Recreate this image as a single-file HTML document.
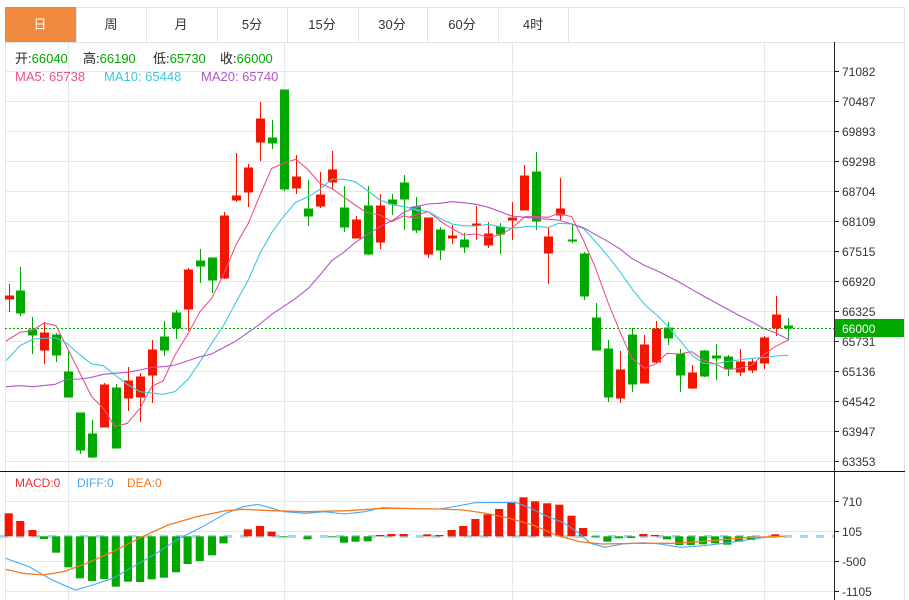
<!DOCTYPE html>
<html><head><meta charset="utf-8"><style>
body{margin:0;background:#fff;width:909px;height:600px;overflow:hidden;font-family:"Liberation Sans","Noto Sans CJK SC",sans-serif}
svg{position:absolute;left:0;top:0}
.r{fill:#f21500;stroke:#f21500}
.g{fill:#00a800;stroke:#00a800}
text{font-family:"Liberation Sans","Noto Sans CJK SC",sans-serif}
</style></head><body>
<svg width="909" height="600" viewBox="0 0 909 600">
<rect x="5.5" y="7.5" width="899" height="35" fill="#fff" stroke="#dde3e8"/>
<rect x="5" y="7" width="71" height="35" fill="#f0893d"/>
<g stroke="#dde3e8"><line x1="146.5" y1="7" x2="146.5" y2="42"/><line x1="217.5" y1="7" x2="217.5" y2="42"/><line x1="287.5" y1="7" x2="287.5" y2="42"/><line x1="358.5" y1="7" x2="358.5" y2="42"/><line x1="427.5" y1="7" x2="427.5" y2="42"/><line x1="498.5" y1="7" x2="498.5" y2="42"/><line x1="568.5" y1="7" x2="568.5" y2="42"/><line x1="76.5" y1="7" x2="76.5" y2="42"/></g>
<g font-size="13" text-anchor="middle" fill="#333">
<text x="40" y="29" fill="#fff">日</text><text x="111" y="29">周</text><text x="181" y="29">月</text><text x="252" y="29">5分</text><text x="322" y="29">15分</text><text x="392" y="29">30分</text><text x="462" y="29">60分</text><text x="533" y="29">4时</text></g>
<line x1="5.5" y1="42" x2="5.5" y2="600" stroke="#dde3e8"/>
<line x1="904.5" y1="42" x2="904.5" y2="600" stroke="#dde3e8"/>
<g stroke="#e1e9ef">
<line x1="5" y1="71.5" x2="834" y2="71.5"/><line x1="5" y1="101.5" x2="834" y2="101.5"/><line x1="5" y1="131.5" x2="834" y2="131.5"/><line x1="5" y1="161.5" x2="834" y2="161.5"/><line x1="5" y1="191.5" x2="834" y2="191.5"/><line x1="5" y1="221.5" x2="834" y2="221.5"/><line x1="5" y1="251.5" x2="834" y2="251.5"/><line x1="5" y1="281.5" x2="834" y2="281.5"/><line x1="5" y1="311.5" x2="834" y2="311.5"/><line x1="5" y1="341.5" x2="834" y2="341.5"/><line x1="5" y1="371.5" x2="834" y2="371.5"/><line x1="5" y1="401.5" x2="834" y2="401.5"/><line x1="5" y1="431.5" x2="834" y2="431.5"/><line x1="5" y1="461.5" x2="834" y2="461.5"/>
<line x1="5" y1="501.5" x2="834" y2="501.5"/><line x1="5" y1="531.5" x2="834" y2="531.5"/><line x1="5" y1="561.5" x2="834" y2="561.5"/><line x1="5" y1="591.5" x2="834" y2="591.5"/>
<line x1="68.5" y1="42" x2="68.5" y2="600"/><line x1="284.5" y1="42" x2="284.5" y2="600"/><line x1="512.5" y1="42" x2="512.5" y2="600"/><line x1="764.5" y1="42" x2="764.5" y2="600"/>
</g>
<line x1="0" y1="471.5" x2="905" y2="471.5" stroke="#111"/>
<line x1="834.5" y1="42" x2="834.5" y2="600" stroke="#222"/>
<g stroke="#222"><line x1="834" y1="71.5" x2="839" y2="71.5"/><line x1="834" y1="101.5" x2="839" y2="101.5"/><line x1="834" y1="131.5" x2="839" y2="131.5"/><line x1="834" y1="161.5" x2="839" y2="161.5"/><line x1="834" y1="191.5" x2="839" y2="191.5"/><line x1="834" y1="221.5" x2="839" y2="221.5"/><line x1="834" y1="251.5" x2="839" y2="251.5"/><line x1="834" y1="281.5" x2="839" y2="281.5"/><line x1="834" y1="311.5" x2="839" y2="311.5"/><line x1="834" y1="341.5" x2="839" y2="341.5"/><line x1="834" y1="371.5" x2="839" y2="371.5"/><line x1="834" y1="401.5" x2="839" y2="401.5"/><line x1="834" y1="431.5" x2="839" y2="431.5"/><line x1="834" y1="461.5" x2="839" y2="461.5"/><line x1="834" y1="501.5" x2="839" y2="501.5"/><line x1="834" y1="531.5" x2="839" y2="531.5"/><line x1="834" y1="561.5" x2="839" y2="561.5"/><line x1="834" y1="591.5" x2="839" y2="591.5"/></g>
<g font-size="12" fill="#333">
<text x="842" y="76">71082</text><text x="842" y="106">70487</text><text x="842" y="136">69893</text><text x="842" y="166">69298</text><text x="842" y="196">68704</text><text x="842" y="226">68109</text><text x="842" y="256">67515</text><text x="842" y="286">66920</text><text x="842" y="316">66325</text><text x="842" y="346">65731</text><text x="842" y="376">65136</text><text x="842" y="406">64542</text><text x="842" y="436">63947</text><text x="842" y="466">63353</text>
<text x="842" y="506">710</text><text x="842" y="536">105</text><text x="842" y="566">-500</text><text x="842" y="596">-1105</text></g>
<line x1="5" y1="328.5" x2="834" y2="328.5" stroke="#00a800" stroke-dasharray="2,2"/>
<rect x="835" y="319" width="69" height="18" fill="#00a800"/>
<text x="842" y="333" font-size="12" fill="#fff">66000</text>
<g font-size="13">
<text x="15" y="63" fill="#222">开:<tspan fill="#00a800">66040</tspan></text>
<text x="83" y="63" fill="#222">高:<tspan fill="#00a800">66190</tspan></text>
<text x="153" y="63" fill="#222">低:<tspan fill="#00a800">65730</tspan></text>
<text x="220" y="63" fill="#222">收:<tspan fill="#00a800">66000</tspan></text>
<text x="15" y="81" fill="#f0508a">MA5: 65738</text>
<text x="104" y="81" fill="#3cc8dc">MA10: 65448</text>
<text x="201" y="81" fill="#b057c8">MA20: 65740</text>
</g>
<g font-size="12"><text x="15" y="487" fill="#f03030">MACD:0</text><text x="77" y="487" fill="#4aa7f0">DIFF:0</text><text x="127" y="487" fill="#f57a20">DEA:0</text></g>
<g stroke-width="1">
<line class="r" x1="9.5" y1="284" x2="9.5" y2="312"/><rect class="r" x="5.5" y="296" width="8" height="3"/>
<line class="g" x1="20.5" y1="267" x2="20.5" y2="316"/><rect class="g" x="16.5" y="291" width="8" height="22"/>
<line class="g" x1="32.5" y1="317" x2="32.5" y2="354"/><rect class="g" x="28.5" y="330" width="8" height="5"/>
<line class="r" x1="44.5" y1="322" x2="44.5" y2="364"/><rect class="r" x="40.5" y="333" width="8" height="17"/>
<line class="g" x1="56.5" y1="333" x2="56.5" y2="362"/><rect class="g" x="52.5" y="335" width="8" height="20"/>
<line class="g" x1="68.5" y1="351" x2="68.5" y2="397"/><rect class="g" x="64.5" y="372" width="8" height="25"/>
<line class="g" x1="80.5" y1="413" x2="80.5" y2="454"/><rect class="g" x="76.5" y="413" width="8" height="37"/>
<line class="g" x1="92.5" y1="420" x2="92.5" y2="458"/><rect class="g" x="88.5" y="434" width="8" height="23"/>
<line class="r" x1="104.5" y1="383" x2="104.5" y2="427"/><rect class="r" x="100.5" y="385" width="8" height="42"/>
<line class="g" x1="116.5" y1="384" x2="116.5" y2="448"/><rect class="g" x="112.5" y="388" width="8" height="60"/>
<line class="r" x1="128.5" y1="367" x2="128.5" y2="411"/><rect class="r" x="124.5" y="381" width="8" height="17"/>
<line class="r" x1="140.5" y1="373" x2="140.5" y2="422"/><rect class="r" x="136.5" y="377" width="8" height="20"/>
<line class="r" x1="152.5" y1="340" x2="152.5" y2="403"/><rect class="r" x="148.5" y="350" width="8" height="25"/>
<line class="g" x1="164.5" y1="321" x2="164.5" y2="356"/><rect class="g" x="160.5" y="337" width="8" height="13"/>
<line class="g" x1="176.5" y1="310" x2="176.5" y2="339"/><rect class="g" x="172.5" y="313" width="8" height="15"/>
<line class="r" x1="188.5" y1="268" x2="188.5" y2="331"/><rect class="r" x="184.5" y="270" width="8" height="39"/>
<line class="g" x1="200.5" y1="249" x2="200.5" y2="283"/><rect class="g" x="196.5" y="261" width="8" height="5"/>
<line class="g" x1="212.5" y1="258" x2="212.5" y2="293"/><rect class="g" x="208.5" y="258" width="8" height="22"/>
<line class="r" x1="224.5" y1="212" x2="224.5" y2="279"/><rect class="r" x="220.5" y="216" width="8" height="62"/>
<line class="r" x1="236.5" y1="153" x2="236.5" y2="202"/><rect class="r" x="232.5" y="196" width="8" height="4"/>
<line class="r" x1="248.5" y1="164" x2="248.5" y2="207"/><rect class="r" x="244.5" y="168" width="8" height="24"/>
<line class="r" x1="260.5" y1="102" x2="260.5" y2="161"/><rect class="r" x="256.5" y="119" width="8" height="23"/>
<line class="g" x1="272.5" y1="120" x2="272.5" y2="149"/><rect class="g" x="268.5" y="138" width="8" height="5"/>
<line class="g" x1="284.5" y1="90" x2="284.5" y2="191"/><rect class="g" x="280.5" y="90" width="8" height="99"/>
<line class="r" x1="296.5" y1="155" x2="296.5" y2="194"/><rect class="r" x="292.5" y="177" width="8" height="11"/>
<line class="g" x1="308.5" y1="180" x2="308.5" y2="226"/><rect class="g" x="304.5" y="209" width="8" height="7"/>
<line class="r" x1="320.5" y1="172" x2="320.5" y2="208"/><rect class="r" x="316.5" y="195" width="8" height="11"/>
<line class="r" x1="332.5" y1="151" x2="332.5" y2="190"/><rect class="r" x="328.5" y="170" width="8" height="12"/>
<line class="g" x1="344.5" y1="186" x2="344.5" y2="232"/><rect class="g" x="340.5" y="208" width="8" height="19"/>
<line class="r" x1="356.5" y1="216" x2="356.5" y2="238"/><rect class="r" x="352.5" y="220" width="8" height="18"/>
<line class="g" x1="368.5" y1="186" x2="368.5" y2="255"/><rect class="g" x="364.5" y="206" width="8" height="48"/>
<line class="r" x1="380.5" y1="194" x2="380.5" y2="249"/><rect class="r" x="376.5" y="206" width="8" height="36"/>
<line class="g" x1="392.5" y1="194" x2="392.5" y2="215"/><rect class="g" x="388.5" y="200" width="8" height="4"/>
<line class="g" x1="404.5" y1="175" x2="404.5" y2="230"/><rect class="g" x="400.5" y="183" width="8" height="16"/>
<line class="g" x1="416.5" y1="197" x2="416.5" y2="233"/><rect class="g" x="412.5" y="207" width="8" height="23"/>
<line class="r" x1="428.5" y1="218" x2="428.5" y2="258"/><rect class="r" x="424.5" y="218" width="8" height="36"/>
<line class="g" x1="440.5" y1="227" x2="440.5" y2="260"/><rect class="g" x="436.5" y="230" width="8" height="20"/>
<line class="r" x1="452.5" y1="225" x2="452.5" y2="244"/><rect class="r" x="448.5" y="236" width="8" height="2"/>
<line class="g" x1="464.5" y1="233" x2="464.5" y2="253"/><rect class="g" x="460.5" y="240" width="8" height="7"/>
<line class="r" x1="476.5" y1="206" x2="476.5" y2="240"/><rect class="r" x="472.5" y="224" width="8" height="1"/>
<line class="r" x1="488.5" y1="222" x2="488.5" y2="248"/><rect class="r" x="484.5" y="234" width="8" height="11"/>
<line class="g" x1="500.5" y1="223" x2="500.5" y2="254"/><rect class="g" x="496.5" y="227" width="8" height="7"/>
<line class="r" x1="512.5" y1="202" x2="512.5" y2="240"/><rect class="r" x="508.5" y="218" width="8" height="2"/>
<line class="r" x1="524.5" y1="165" x2="524.5" y2="210"/><rect class="r" x="520.5" y="176" width="8" height="34"/>
<line class="g" x1="536.5" y1="152" x2="536.5" y2="230"/><rect class="g" x="532.5" y="172" width="8" height="49"/>
<line class="r" x1="548.5" y1="228" x2="548.5" y2="284"/><rect class="r" x="544.5" y="237" width="8" height="16"/>
<line class="r" x1="560.5" y1="178" x2="560.5" y2="220"/><rect class="r" x="556.5" y="209" width="8" height="6"/>
<line class="g" x1="572.5" y1="224" x2="572.5" y2="243"/><rect class="g" x="568.5" y="240" width="8" height="1"/>
<line class="g" x1="584.5" y1="252" x2="584.5" y2="300"/><rect class="g" x="580.5" y="254" width="8" height="42"/>
<line class="g" x1="596.5" y1="303" x2="596.5" y2="350"/><rect class="g" x="592.5" y="318" width="8" height="32"/>
<line class="g" x1="608.5" y1="340" x2="608.5" y2="402"/><rect class="g" x="604.5" y="349" width="8" height="48"/>
<line class="r" x1="620.5" y1="351" x2="620.5" y2="403"/><rect class="r" x="616.5" y="370" width="8" height="28"/>
<line class="g" x1="632.5" y1="328" x2="632.5" y2="392"/><rect class="g" x="628.5" y="335" width="8" height="49"/>
<line class="r" x1="644.5" y1="335" x2="644.5" y2="383"/><rect class="r" x="640.5" y="345" width="8" height="38"/>
<line class="r" x1="656.5" y1="321" x2="656.5" y2="364"/><rect class="r" x="652.5" y="329" width="8" height="33"/>
<line class="g" x1="668.5" y1="322" x2="668.5" y2="345"/><rect class="g" x="664.5" y="328" width="8" height="10"/>
<line class="g" x1="680.5" y1="349" x2="680.5" y2="392"/><rect class="g" x="676.5" y="354" width="8" height="21"/>
<line class="r" x1="692.5" y1="365" x2="692.5" y2="389"/><rect class="r" x="688.5" y="373" width="8" height="15"/>
<line class="g" x1="704.5" y1="350" x2="704.5" y2="377"/><rect class="g" x="700.5" y="351" width="8" height="25"/>
<line class="g" x1="716.5" y1="344" x2="716.5" y2="380"/><rect class="g" x="712.5" y="356" width="8" height="2"/>
<line class="g" x1="728.5" y1="355" x2="728.5" y2="376"/><rect class="g" x="724.5" y="357" width="8" height="12"/>
<line class="r" x1="740.5" y1="349" x2="740.5" y2="376"/><rect class="r" x="736.5" y="362" width="8" height="10"/>
<line class="r" x1="752.5" y1="359" x2="752.5" y2="373"/><rect class="r" x="748.5" y="362" width="8" height="8"/>
<line class="r" x1="764.5" y1="336" x2="764.5" y2="369"/><rect class="r" x="760.5" y="338" width="8" height="25"/>
<line class="r" x1="776.5" y1="296" x2="776.5" y2="336"/><rect class="r" x="772.5" y="315" width="8" height="13"/>
<line class="g" x1="788.5" y1="318" x2="788.5" y2="340"/><rect class="g" x="784.5" y="326" width="8" height="2"/>
</g>
<g fill="none" stroke-width="1.1">
<g transform="translate(0,80) scale(0.33333)">
<polyline vector-effect="non-scaling-stroke" stroke="#f0508a" points="18,783 60,757 95,752 133,729 168,737 205,810 240,880 275,950 310,985 345,1040 382,1030 420,985 455,920 490,902 525,825 565,760 600,695 635,655 670,585 710,490 745,430 780,345 815,265 850,250 887,238 920,265 960,310 995,325 1030,350 1065,375 1100,398 1140,405 1175,425 1210,408 1245,415 1260,410"/>
<polyline vector-effect="non-scaling-stroke" stroke="#3cc8dc" points="18,842 60,797 100,777 165,773 200,790 240,825 275,852 310,857 345,885 380,912 420,935 490,943 525,935 565,897 600,845 635,790 670,738 705,672 745,600 780,520 815,458 850,410 887,367 925,350 960,328 995,298 1030,298 1065,305 1100,330 1140,360 1180,375 1215,380 1260,395"/>
<polyline vector-effect="non-scaling-stroke" stroke="#b057c8" points="18,920 60,917 100,920 165,913 200,898 240,897 275,892 310,883 345,880 380,877 420,870 455,862 490,860 525,855 565,842 600,830 635,822 670,803 705,785 745,757 780,732 815,703 850,680 887,655 925,625 960,585 995,542 1030,518 1065,488 1100,465 1140,440 1180,420 1215,395 1260,380"/>
</g>
<g transform="translate(410,80) scale(0.33333)">
<polyline vector-effect="non-scaling-stroke" stroke="#f0508a" points="0,410 55,395 100,430 160,465 200,462 235,472 270,465 305,445 345,410 380,410 415,412 445,400 485,410 520,480 555,560 595,670 630,755 665,835 705,865 740,850 770,820 805,822 845,815 880,840 915,852 950,868 985,866 1025,855 1060,825 1095,800 1135,780"/>
<polyline vector-effect="non-scaling-stroke" stroke="#3cc8dc" points="0,385 55,395 90,415 125,432 160,437 200,438 235,433 270,440 305,445 345,440 380,438 415,443 445,430 485,432 520,445 555,483 595,530 630,575 665,625 705,675 740,705 770,735 805,775 845,825 880,850 915,852 950,845 985,840 1025,835 1060,833 1100,828 1135,826"/>
<polyline vector-effect="non-scaling-stroke" stroke="#b057c8" points="0,383 55,372 90,370 125,365 160,368 200,373 235,382 270,395 305,408 345,412 380,415 415,418 445,420 485,432 520,443 555,463 595,485 630,507 665,535 705,557 740,572 770,587 805,605 845,628 880,648 915,667 950,686 985,705 1025,725 1060,745 1095,758 1135,778"/>
</g>
</g>
<g transform="translate(0,460) scale(0.57904,0.33333)">
<line x1="0" y1="229" x2="1440" y2="229" stroke="#9fd9f0" stroke-width="3" stroke-dasharray="8,8" vector-effect="non-scaling-stroke"/>
<g fill="#f21500">
<rect x="8" y="160" width="14" height="69"/><rect x="28" y="183" width="14" height="46"/><rect x="49" y="210" width="14" height="19"/>
<rect x="421" y="208" width="14" height="21"/><rect x="442" y="198" width="14" height="31"/><rect x="462" y="215" width="14" height="14"/>
<rect x="649" y="225" width="14" height="4"/><rect x="669" y="222" width="14" height="7"/><rect x="690" y="222" width="14" height="7"/><rect x="731" y="223" width="14" height="6"/><rect x="752" y="225" width="14" height="4"/>
<rect x="773" y="210" width="14" height="19"/><rect x="793" y="198" width="14" height="31"/><rect x="814" y="177" width="14" height="52"/><rect x="835" y="163" width="14" height="66"/><rect x="855" y="147" width="14" height="82"/><rect x="876" y="128" width="14" height="101"/><rect x="897" y="112" width="14" height="117"/><rect x="917" y="124" width="14" height="105"/><rect x="938" y="130" width="14" height="99"/><rect x="959" y="134" width="14" height="95"/><rect x="980" y="167" width="14" height="62"/><rect x="1000" y="204" width="14" height="25"/>
<rect x="1104" y="222" width="14" height="7"/><rect x="1124" y="225" width="14" height="4"/><rect x="1332" y="223" width="14" height="6"/>
</g>
<g fill="#00a800">
<rect x="69" y="229" width="14" height="8"/><rect x="90" y="229" width="14" height="49"/><rect x="111" y="229" width="14" height="93"/><rect x="131" y="229" width="14" height="126"/><rect x="152" y="229" width="14" height="134"/><rect x="173" y="229" width="14" height="128"/><rect x="193" y="229" width="14" height="151"/><rect x="214" y="229" width="14" height="136"/><rect x="235" y="229" width="14" height="137"/><rect x="255" y="229" width="14" height="129"/><rect x="276" y="229" width="14" height="124"/><rect x="297" y="229" width="14" height="108"/><rect x="317" y="229" width="14" height="83"/><rect x="338" y="229" width="14" height="74"/><rect x="359" y="229" width="14" height="57"/><rect x="379" y="229" width="14" height="21"/>
<rect x="483" y="229" width="14" height="3"/><rect x="524" y="229" width="14" height="9"/><rect x="566" y="229" width="14" height="3"/><rect x="587" y="229" width="14" height="19"/><rect x="607" y="229" width="14" height="16"/><rect x="628" y="229" width="14" height="15"/>
<rect x="1021" y="229" width="14" height="3"/><rect x="1042" y="229" width="14" height="16"/><rect x="1062" y="229" width="14" height="6"/><rect x="1083" y="229" width="14" height="5"/><rect x="1145" y="229" width="14" height="9"/><rect x="1166" y="229" width="14" height="26"/><rect x="1186" y="229" width="14" height="26"/><rect x="1207" y="229" width="14" height="24"/><rect x="1228" y="229" width="14" height="21"/><rect x="1249" y="229" width="14" height="25"/><rect x="1269" y="229" width="14" height="16"/><rect x="1290" y="229" width="14" height="11"/>
</g>
<polyline fill="none" stroke="#4aa7f0" stroke-width="1.1" vector-effect="non-scaling-stroke" points="10,295 50,320 90,360 130,390 160,375 195,355 230,320 270,280 310,235 350,200 390,160 420,140 445,133 470,145 490,155 530,160 560,155 595,162 630,155 660,143 700,145 760,147 790,138 820,128 890,127 910,140 940,165 975,190 1000,220 1020,250 1045,262 1075,252 1110,248 1140,252 1175,262 1210,258 1250,250 1290,240 1320,232 1355,229"/>
<polyline fill="none" stroke="#f57a20" stroke-width="1.3" vector-effect="non-scaling-stroke" points="10,328 40,340 75,345 110,335 150,310 195,275 240,235 290,195 340,170 390,152 420,148 470,152 530,155 600,152 660,145 760,147 800,150 840,160 880,175 920,195 960,225 1000,245 1040,252 1100,250 1160,250 1210,245 1260,237 1300,232 1355,229"/>
</g>
</svg>
</body></html>
